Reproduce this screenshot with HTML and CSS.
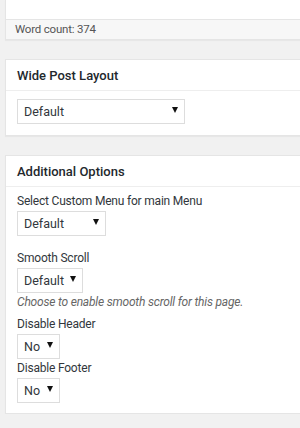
FILE: index.html
```html
<!DOCTYPE html>
<html>
    <head>
        <title>Post options</title>
        <meta charset="UTF-8">
        <meta name="viewport" content="width=device-width, initial-scale=1.0">
        <link rel="stylesheet" href="styles.css">
    </head>
    <body>
        <div class="wrap">

            <div class="editorBox">
                <div class="editorArea"></div>
                <div class="statusBar">Word count: 374</div>
            </div>

            <div class="postbox">
                <h2 class="hndle">Wide Post Layout</h2>
                <div class="inside insideTop">
                    <div class="fakeSelect selWide">
                        <span>Default</span><i class="arrow"></i>
                    </div>
                </div>
            </div>

            <div class="postbox">
                <h2 class="hndle">Additional Options</h2>
                <div class="inside">
                    <label class="optLabel">Select Custom Menu for main Menu</label>
                    <div class="fakeSelect selMenu">
                        <span>Default</span><i class="arrow"></i>
                    </div>

                    <label class="optLabel spaced">Smooth Scroll</label>
                    <div class="fakeSelect selScroll">
                        <span>Default</span><i class="arrow"></i>
                    </div>
                    <p class="description">Choose to enable smooth scroll for this page.</p>

                    <label class="optLabel small">Disable Header</label>
                    <div class="fakeSelect selNo">
                        <span>No</span><i class="arrow"></i>
                    </div>

                    <label class="optLabel">Disable Footer</label>
                    <div class="fakeSelect selNo">
                        <span>No</span><i class="arrow"></i>
                    </div>
                </div>
            </div>

        </div>
    </body>
</html>
```

FILE: styles.css
```css
html {
    overflow: hidden;
}

body {
    margin: 0;
    background: #f1f1f1;
    font-family: Roboto, "Open Sans", sans-serif;
    font-size: 12px;
    letter-spacing: -0.2px;
    line-height: 18px;
    color: #32373c;
}

.wrap {
    padding-left: 5px;
    margin-right: -20px;
}

/* editor + word count */
.editorBox {
    border: 1px solid #e5e5e5;
    border-top: none;
    background: #fff;
    box-shadow: 0 1px 1px rgba(0,0,0,.04);
}
.editorArea {
    height: 19px;
    border-bottom: 1px solid #e5e5e5;
}
.statusBar {
    background: #f7f7f7;
    height: 19px;
    padding-left: 9px;
    line-height: 19px;
    font-size: 11.5px;
    color: #555;
}

/* boxes */
.postbox {
    margin-top: 19px;
    background: #fff;
    border: 1px solid #e5e5e5;
    box-shadow: 0 1px 1px rgba(0,0,0,.04);
}
.hndle {
    margin: 0;
    padding: 6px 12px 4px 11px;
    font-size: 13px;
    line-height: 20px;
    font-weight: 500;
    letter-spacing: 0;
    color: #23282d;
    border-bottom: 1px solid #eee;
}
.inside {
    padding: 5px 11px 10px;
}
.insideTop {
    padding-top: 7px;
    padding-bottom: 11px;
}

.optLabel {
    display: block;
}
.optLabel.spaced {
    margin-top: 13px;
}
.optLabel.small {
    margin-top: 4px;
}

.description {
    margin: 0;
    font-style: italic;
    color: #666;
}

/* select look-alike */
.fakeSelect {
    box-sizing: border-box;
    display: flex;
    align-items: center;
    justify-content: space-between;
    height: 25px;
    margin-top: 1px;
    padding: 0 6px 0 6px;
    border: 1px solid #ddd;
    background: #fff;
    font-size: 12.5px;
    letter-spacing: 0;
    color: #32373c;
}
.selWide { width: 168px; }
.selMenu { width: 89px; }
.selScroll { width: 66px; }
.selNo { width: 43px; }

.arrow {
    width: 0;
    height: 0;
    border-left: 3px solid transparent;
    border-right: 3px solid transparent;
    border-top: 6px solid #111;
    margin-top: -4px;
}
```
